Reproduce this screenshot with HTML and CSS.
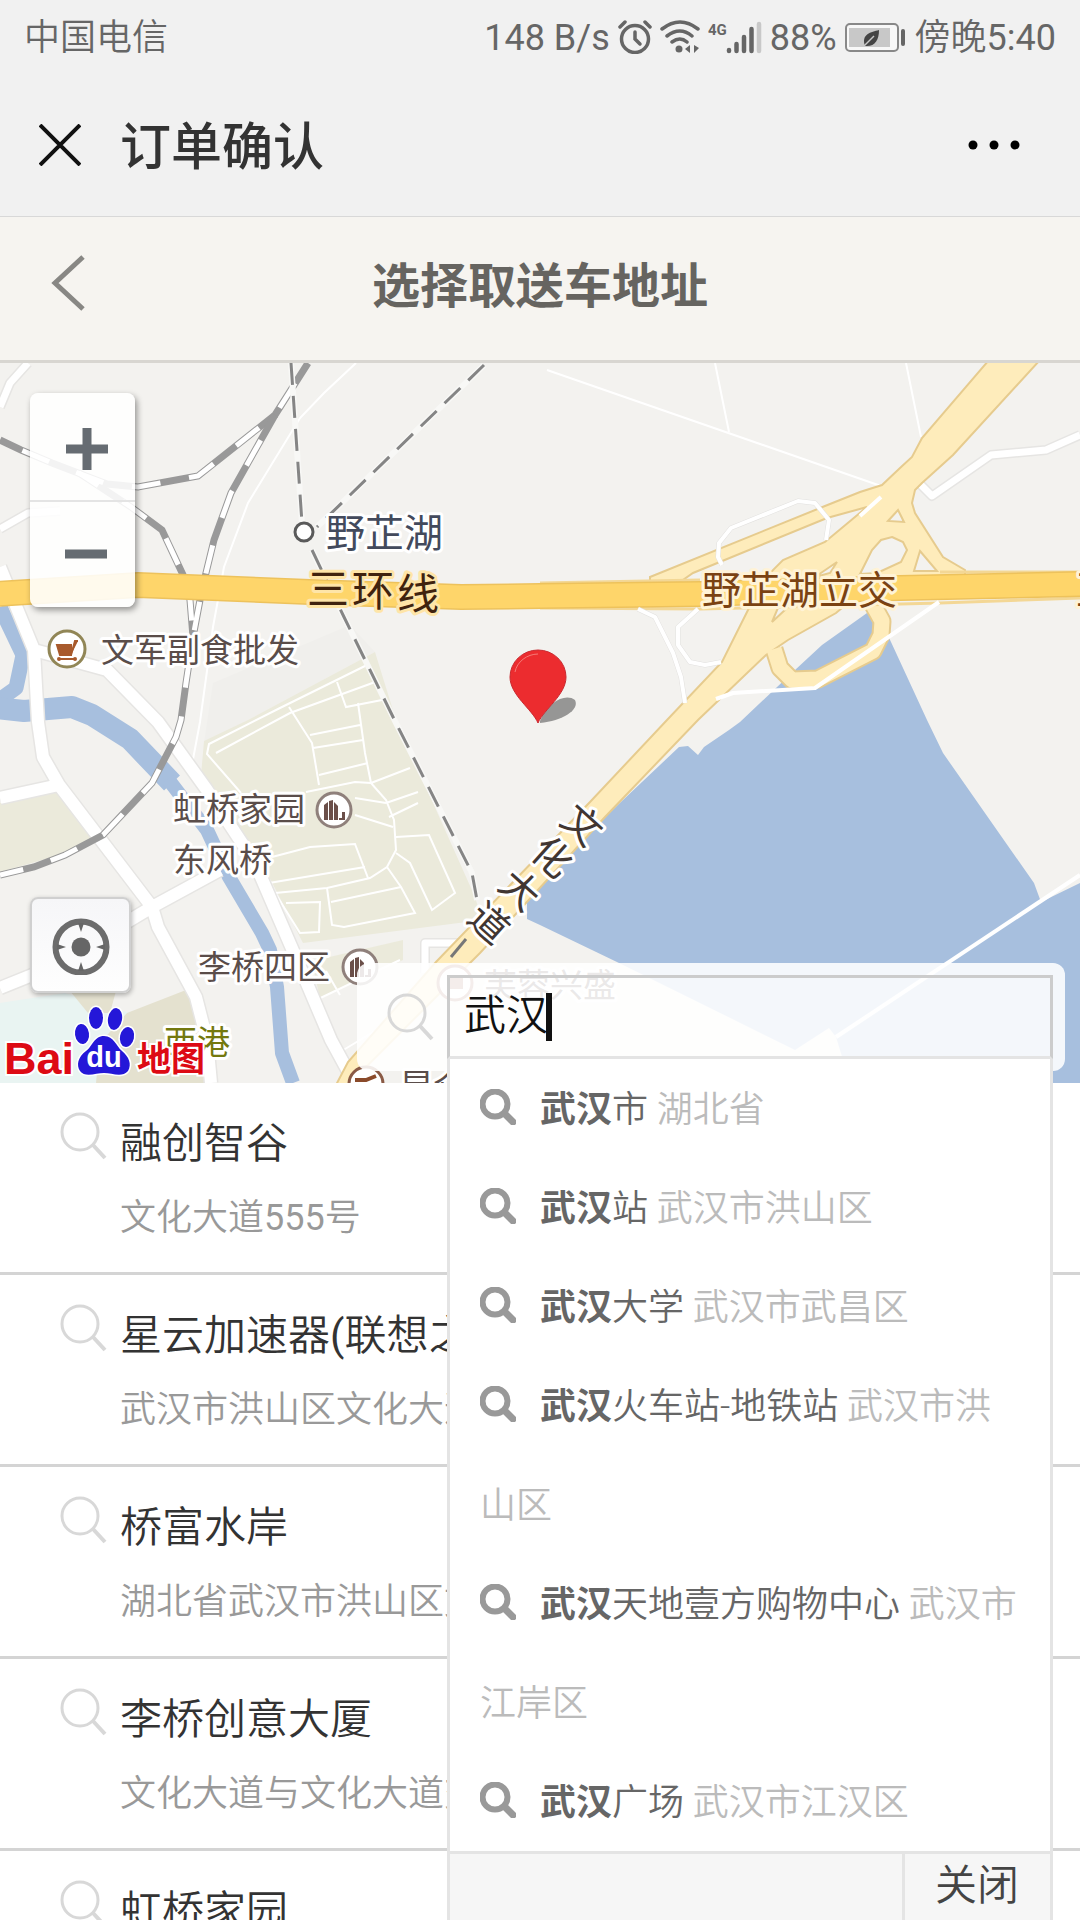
FILE: index.html
```html
<!DOCTYPE html>
<html lang="zh-CN">
<head>
<meta charset="utf-8">
<meta name="viewport" content="width=device-width, initial-scale=1">
<title>订单确认</title>
<link rel="stylesheet" href="styles.css">
</head>
<body>
<svg class="defs" aria-hidden="true">
  <symbol id="search-thin" viewBox="0 0 48 48">
    <circle cx="20" cy="20" r="18" fill="none" stroke="currentColor" stroke-width="3"/>
    <path d="M33 33L45 46" stroke="currentColor" stroke-width="4"/>
  </symbol>
  <symbol id="search-bold" viewBox="0 0 36 36">
    <circle cx="15" cy="15" r="12.500" fill="none" stroke="currentColor" stroke-width="6"/>
    <path d="M25 25L33 33" stroke="currentColor" stroke-width="7" stroke-linecap="round"/>
  </symbol>
  <symbol id="poi-home" viewBox="-20 -20 40 40">
    <circle r="17" fill="#fff" stroke="#8f807b" stroke-width="3"/>
    <path d="M-10 10V-5L-6 -8V10ZM-5 10V-9L-1 -10V10ZM0 10V-8L4 -4V10ZM5 10V8H8V2H11V10Z" fill="#6b4f49"/>
  </symbol>
</svg>
<div class="app">
  <div class="status">
    <span class="carrier">中国电信</span>
    <span class="num">148 B/s</span>
    <svg width="34" height="34" viewBox="0 0 34 34" fill="none" stroke="#666" stroke-linecap="round">
      <circle cx="17" cy="19" r="13.500" stroke-width="3.500"/><path d="M17 12V19L22 24" stroke-width="3.500"/><path d="M2 7L7 2M32 7L27 2" stroke-width="3.500"/>
    </svg>
    <svg width="40" height="34" viewBox="0 0 40 34" fill="none" stroke="#666" stroke-linecap="round" stroke-width="3.500">
      <path d="M2 9Q20 -5 38 9M7 16Q20 6 32 16M12 22Q20 16 27 22"/><circle cx="19" cy="29" r="3.500" fill="#666" stroke="none"/>
      <path d="M30 25V33L25 29ZM34 25V33L39 28Z" fill="#666" stroke="none"/>
    </svg>
    <svg class="signal" width="54" height="34" viewBox="0 0 54 34">
      <text class="net" x="0" y="15">4G</text>
      <g stroke="#666" stroke-width="4.500" stroke-linecap="round"><path d="M21 30V31M28.500 24V31M36 17V31M43.500 9V31"/><path d="M51 4V31" stroke="#c8c8c8"/></g>
    </svg>
    <span class="num">88%</span>
    <svg width="62" height="34" viewBox="0 0 62 34">
      <rect x="1" y="4" width="52" height="27" rx="4" fill="#f8f8f8" stroke="#888" stroke-width="2"/><rect x="4" y="8" width="41" height="19" fill="#c8c8c8"/>
      <path d="M20 26C16 14 26 12 34 10C34 20 30 27 20 26Z" fill="#444"/><path d="M19 26L29 16" stroke="#c8c8c8" stroke-width="1.500"/>
      <rect x="56" y="9" width="4" height="17" rx="2" fill="#666"/>
    </svg>
    <span class="clock">傍晚<b class="num">5:40</b></span>
  </div>
  <header class="topbar">
    <button class="icon-btn" type="button" aria-label="关闭页面"><svg width="42" height="42" viewBox="0 0 42 42"><path d="M1 1L41 41M41 1L1 41" stroke="#111" stroke-width="4"/></svg></button>
    <span class="topbar-title">订单确认</span>
    <button class="icon-btn" type="button" aria-label="更多"><svg width="52" height="12" viewBox="0 0 52 12"><circle cx="5" cy="6" r="4.500"/><circle cx="26" cy="6" r="4.500"/><circle cx="47" cy="6" r="4.500"/></svg></button>
  </header>
  <nav class="nav">
    <button class="icon-btn" type="button" aria-label="返回"><svg width="36" height="56" viewBox="0 0 36 56"><path d="M33 2L5 28L33 54" fill="none" stroke="#888784" stroke-width="5"/></svg></button>
    <h1 class="nav-title">选择取送车地址</h1>
  </nav>

  <section class="map">
    <svg class="map-canvas" viewBox="0 0 1080 720" preserveAspectRatio="xMidYMid slice" role="img" aria-label="地图">
      <rect width="1080" height="720" fill="#f3f2ef"/>
      <!-- built-up and green areas -->
      <path d="M0 440L59 429L100 470L60 492L0 509Z" fill="#ebeadb"/>
      <path d="M0 640L65 630L130 650L96 720H0Z" fill="#e9f4f2"/>
      <path d="M127 650L186 627L200 650L207 720H96L100 680Z" fill="#e4e1cf"/>
      <path d="M70 628H116L110 650H88Z" fill="#e4e1cf"/>
      <path d="M213 320L350 262L375 289L248 357L204 380Z" fill="#f0efec"/>
      <path d="M375 289L248 357L204 378L200 424L262 500L303 580L482 557L475 534L396 357Z" fill="#ebeadb"/>
      <path d="M312 598L403 577V597L320 636Z" fill="#ebeadb"/>
      <!-- water -->
      <path d="M867 250L822 282L795 307L740 359L729 367L704 384L698 392L688 383L679 384L605 454L527 535V556L540 562L619 600L795 687L829 665L836 674L850 720H1080V520L1041 539L1034 520L943 390L927 357L891 279L880 256Z" fill="#a7bfde"/>
      <g fill="none" stroke="#a7bfde" stroke-linejoin="round">
        <path d="M0 244L23 292L16 325L-5 340" stroke-width="15"/>
        <path d="M-5 345L24 348L72 344L92 352L130 376L172 420" stroke-width="22"/>
        <path d="M168 416L207 467L229 514L262 570L270 587L277 624L282 690L293 720" stroke-width="14"/>
      </g>
      <!-- minor streets -->
      <g fill="none" stroke="#fff" stroke-width="2">
        <path d="M356 0L324 30L300 55L248 140L224 204L213 264L200 359L191 407"/>
        <path d="M547 7L881 123M715 0L729 69M906 0L921 74"/>
        <path d="M241 430L207 391L209 381L280 345L367 302M216 390L290 350L378 318M289 344L312 380L319 422M337 319L346 344L382 337M358 340L365 390L371 420M310 372L360 362M313 385L363 377M319 412L368 400"/>
        <path d="M306 429L355 419L371 420L386 437L394 457L396 487L387 504L370 515L327 525L275 530M371 420L410 405M386 440L418 429M389 454L418 440M355 435L386 440M355 452L393 464"/>
        <path d="M272 494L310 484L355 481L368 515M269 520L365 504M396 474L429 472L455 530L432 547L410 500L396 490M387 504L401 524L415 550L344 564L332 562L327 525M331 539L401 524M275 530L300 570L319 569L320 539L286 540"/>
        <path d="M310 640L400 597M326 608L340 632M335 692L380 665"/>
      </g>
      <!-- local roads: casing, then surface -->
      <g fill="none" stroke="#e6e5e3" stroke-width="15" stroke-linejoin="round">
        <path d="M0 204L34 287L38 359L43 394L59 422L152 544L158 564L196 634L207 677L211 720M34 287L107 307L158 359L207 427L255 500L300 604L331 677L350 712M0 435L59 422M0 625L52 604L152 544L220 507"/>
        <path d="M28 0L10 20L0 44M919 120L932 133L991 92L1046 87L1080 72M0 166L28 150L60 148M425 610V580H460" stroke-width="10"/>
      </g>
      <g fill="none" stroke="#fff" stroke-width="12" stroke-linejoin="round">
        <path d="M0 204L34 287L38 359L43 394L59 422L152 544L158 564L196 634L207 677L211 720M34 287L107 307L158 359L207 427L255 500L300 604L331 677L350 712M0 435L59 422M0 625L52 604L152 544L220 507"/>
        <path d="M28 0L10 20L0 44M919 120L932 133L991 92L1046 87L1080 72M0 166L28 150L60 148M425 610V580H460" stroke-width="7"/>
        <path d="M1080 512L836 674" stroke-width="4"/>
      </g>
      <!-- railways -->
      <g fill="none" stroke="#999" stroke-width="7">
        <path d="M308 0L275 52L198 113L138 124L107 121L52 100L21 87L0 77"/>
        <path d="M275 52L231 130L214 177L205 214L200 237L193 274L186 320L181 357L176 374L152 420L103 472L65 492L34 504L0 512"/>
        <path d="M79 110L131 144L162 167L184 214L190 237L193 274"/>
      </g>
      <g fill="none" stroke="#fff" stroke-width="5" stroke-dasharray="29 29">
        <path d="M308 0L275 52L198 113L138 124L107 121L52 100L21 87L0 77" stroke-dashoffset="34"/>
        <path d="M275 52L231 130L214 177L205 214L200 237L193 274L186 320L181 357L176 374L152 420L103 472L65 492L34 504L0 512" stroke-dashoffset="29"/>
        <path d="M79 110L131 144L162 167L184 214L190 237L193 274" stroke-dashoffset="6"/>
      </g>
      <!-- metro under construction -->
      <path d="M291 0L302 160M484 2L317 164M312 187L344 254L396 360L472 510L477 537" fill="none" stroke="#f8f8f6" stroke-width="6"/>
      <path d="M291 0L302 160M484 2L317 164M312 187L344 254L396 360L472 510L477 537" fill="none" stroke="#858585" stroke-width="3" stroke-dasharray="22 11"/>
      <!-- avenue and interchange -->
      <path d="M872 240L882 258L881 272L873 288L818 316L792 317L780 305L774 286" fill="none" stroke="#e6cb8e" stroke-width="19" stroke-linejoin="round"/>
      <path fill="#feecbb" fill-rule="evenodd" stroke="#e6cb8e" stroke-width="2" d="M989 -3L922 75L912 94L900 105L882 122L860 129L820 145L650 214V222L680 219L693 210L827 155L867 144L825 179L783 197L770 210L748 247L722 299L667 357L590 439L436 599L348 699L336 722H348L480 590L605 454L698 357L766 292L788 277L836 250L848 240L965 222V207L943 194L915 150L912 140L915 127L922 120L953 92L1040 -3ZM898 147L904 159L888 158ZM892 174L903 179L907 187L901 199L877 210L860 211L872 187L881 177ZM920 188L937 208L914 208ZM837 199L830 210L815 214ZM786 246L772 259L780 240Z"/>
      <path d="M872 240L882 258L881 272L873 288L818 316L792 317L780 305L774 286" fill="none" stroke="#feecbb" stroke-width="15" stroke-linejoin="round"/>
      <path d="M540 220L700 217M540 245L700 246L940 240L1080 235M940 209L1080 209" fill="none" stroke="#f3d795" stroke-width="3"/>
      <path d="M-5 231L138 222L310 229L461 234L540 233L700 231L900 225L1085 221" fill="none" stroke="#edc25c" stroke-width="26"/>
      <path d="M-5 231L138 222L310 229L461 234L540 233L700 231L900 225L1085 221" fill="none" stroke="#fed56a" stroke-width="23"/>
      <g fill="none" stroke-linejoin="round">
        <path stroke="#e2e1df" stroke-width="5" d="M722 202L718 194L719 180L731 165L798 138L815 140L829 157L826 177M698 246L678 264V282L690 299L705 302L721 299M638 246L655 254L673 290L681 314L685 340"/>
        <path stroke="#fff" stroke-width="4" d="M722 202L718 194L719 180L731 165L798 138L815 140L829 157L826 177M698 246L678 264V282L690 299L705 302L721 299M638 246L655 254L673 290L681 314L685 340M716 336L733 330L815 325L939 239M881 134L860 153"/>
      </g>
      <!-- station and points of interest -->
      <circle cx="304" cy="169" r="9" fill="#fff" stroke="#5a5a5a" stroke-width="3"/>
      <circle cx="67" cy="286" r="18" fill="#fff" stroke="#918656" stroke-width="3"/>
      <path d="M57 282H71V292H60ZM71 292L75 278H78M59 296H76" fill="#a85a2c" stroke="#a85a2c" stroke-width="2"/><circle cx="59" cy="296" r="2" fill="#a85a2c"/><circle cx="75" cy="296" r="2" fill="#a85a2c"/>
      <use href="#poi-home" x="314" y="427" width="40" height="40"/>
      <use href="#poi-home" x="340" y="584" width="40" height="40"/>
      <circle cx="455" cy="620" r="17" fill="#fff" stroke="#a3685c" stroke-width="3"/><path d="M447 614H463V626H447Z" fill="#a3685c"/>
      <circle cx="366" cy="721" r="17" fill="#fff" stroke="#8a5a45" stroke-width="3"/><path d="M355 717H366L376 713" fill="none" stroke="#8a4a2a" stroke-width="4"/>
      <path d="M466 576L451 594" stroke="#777" stroke-width="3"/>
      <!-- place names -->
      <g class="place">
        <text class="lg metro" x="326" y="184">野芷湖</text>
        <text class="xl road" x="307 352 397" y="241 243 246">三环线</text>
        <text class="lg junction" x="702" y="241">野芷湖立交</text>
        <text class="lg junction" x="1076" y="241">互</text>
        <text x="101" y="299">文军副食批发</text>
        <text x="173" y="458">虹桥家园</text>
        <text x="173" y="509">东风桥</text>
        <text x="198" y="616">李桥四区</text>
        <text x="484" y="634">芙蓉兴盛</text>
        <text x="400" y="735">昆仑</text>
        <text class="park" x="164" y="691">西港</text>
        <g class="lg avenue" text-anchor="middle">
          <text transform="translate(582 462) rotate(42)" y="14">文</text>
          <text transform="translate(552 494) rotate(42)" y="14">化</text>
          <text transform="translate(520 527) rotate(42)" y="14">大</text>
          <text transform="translate(489 560) rotate(42)" y="14">道</text>
        </g>
      </g>
      <!-- selected position -->
      <path d="M540 358C548 338 566 330 575 337C580 347 562 358 540 360Z" fill="#777" opacity=".75"/>
      <path d="M538 360C532 346 510 332 510 314A28 27 0 0 1 566 314C566 332 544 346 538 360Z" fill="#ec2c2f" stroke="#c92a30" stroke-width="1"/>
      <path d="M515 309A24 22 0 0 1 538 291" fill="none" stroke="#f57a76" stroke-width="1"/>
      <!-- map provider -->
      <g class="brand">
        <text x="4" y="711">Bai</text>
        <g fill="#2417d8" stroke="#fff" stroke-width="3" paint-order="stroke">
          <ellipse cx="96" cy="655" rx="7" ry="11"/><ellipse cx="115" cy="656" rx="7" ry="11" transform="rotate(10 115 656)"/><ellipse cx="82" cy="671" rx="7" ry="10" transform="rotate(-8 82 671)"/><ellipse cx="127" cy="674" rx="7" ry="10" transform="rotate(12 127 674)"/>
          <path d="M104 673C94 673 92 684 86 688C78 694 76 702 80 708C85 715 96 710 104 710C112 710 122 715 128 708C132 701 129 694 122 688C116 683 114 673 104 673Z"/>
        </g>
        <text class="brand-du" x="104" y="704" text-anchor="middle">du</text>
        <text class="brand-map" x="137" y="708">地图</text>
      </g>
    </svg>

    <div class="zoom">
      <button type="button" aria-label="放大"><svg width="44" height="44" viewBox="0 0 44 44"><path d="M22 1V43M1 22H43" stroke="#666c72" stroke-width="9"/></svg></button>
      <button type="button" aria-label="缩小"><svg width="44" height="44" viewBox="0 0 44 44"><path d="M1 22H43" stroke="#666c72" stroke-width="9"/></svg></button>
    </div>
    <button class="locate" type="button" aria-label="定位"><svg width="60" height="60" viewBox="-30 -32 60 60"><circle r="25.500" fill="none" stroke="#6c6c6c" stroke-width="6"/><circle r="9.500" fill="#666"/><path d="M-3 -24H3L0 -15ZM-3 24H3L0 15ZM-24 -3V3L-15 0ZM24 -3V3L15 0Z" fill="#666"/></svg></button>

    <div class="search">
      <svg class="search-icon" width="48" height="48"><use href="#search-thin"/></svg>
      <div class="search-field">
        <input class="search-input" type="text" value="武汉" aria-label="搜索地址">
        <span class="caret"></span>
        <div class="suggest">
          <ul class="suggest-list">
            <li><svg class="s-icon"><use href="#search-bold"/></svg><b>武汉</b>市 <span class="area">湖北省</span></li>
            <li><svg class="s-icon"><use href="#search-bold"/></svg><b>武汉</b>站 <span class="area">武汉市洪山区</span></li>
            <li><svg class="s-icon"><use href="#search-bold"/></svg><b>武汉</b>大学 <span class="area">武汉市武昌区</span></li>
            <li><svg class="s-icon"><use href="#search-bold"/></svg><b>武汉</b>火车站-地铁站 <span class="area">武汉市洪山区</span></li>
            <li><svg class="s-icon"><use href="#search-bold"/></svg><b>武汉</b>天地壹方购物中心 <span class="area">武汉市江岸区</span></li>
            <li><svg class="s-icon"><use href="#search-bold"/></svg><b>武汉</b>广场 <span class="area">武汉市江汉区</span></li>
          </ul>
          <div class="suggest-foot"><button class="suggest-close" type="button">关闭</button></div>
        </div>
      </div>
    </div>
  </section>

  <ul class="places">
    <li><svg class="p-icon"><use href="#search-thin"/></svg><div><h2>融创智谷</h2><p>文化大道<span class="num">555</span>号</p></div></li>
    <li><svg class="p-icon"><use href="#search-thin"/></svg><div><h2>星云加速器<span class="num">(</span>联想之星<span class="num">)</span></h2><p>武汉市洪山区文化大道</p></div></li>
    <li><svg class="p-icon"><use href="#search-thin"/></svg><div><h2>桥富水岸</h2><p>湖北省武汉市洪山区文</p></div></li>
    <li><svg class="p-icon"><use href="#search-thin"/></svg><div><h2>李桥创意大厦</h2><p>文化大道与文化大道交</p></div></li>
    <li><svg class="p-icon"><use href="#search-thin"/></svg><div><h2>虹桥家园</h2></div></li>
  </ul>
</div>
</body>
</html>
```
FILE: styles.css
```css
* { box-sizing: border-box; }
body, h1, h2, p, ul { margin: 0; padding: 0; }
ul { list-style: none; }
body { font-family: Roboto, "Noto Sans CJK SC", sans-serif; background: #fff; color: #333; }
button, input { font: inherit; color: inherit; margin: 0; padding: 0; border: 0; background: none; }
svg { display: block; flex: none; }
.defs { position: absolute; width: 0; height: 0; }
.app { display: flex; flex-direction: column; height: 100vh; overflow: hidden; }
.app > * { flex: none; }

.status { display: flex; align-items: center; gap: 8px; height: 74px; padding: 0 24px; background: #f1f1f1; color: #666; font-size: 36px; line-height: 48px; }
.status > span { padding-top: 2px; }
.carrier { margin-right: auto; }
.carrier, .clock { font-weight: 350; }
.num { font-weight: 400; }
.net { font: bold 15px Roboto, sans-serif; fill: #666; }

.topbar { display: flex; align-items: center; height: 143px; padding: 0 60px 0 39px; background: #f1f1f1; border-bottom: 1px solid #d8d8d8; }
.icon-btn { display: flex; align-items: center; }
.topbar-title { flex: 1; margin-left: 39px; padding-top: 6px; font-size: 51px; line-height: 72px; font-weight: 500; color: #333; }

.nav { display: grid; grid-template-columns: 90px 1fr 90px; align-items: center; height: 146px; background: #f6f4f0; border-bottom: 3px solid #d8d6d1; }
.nav .icon-btn { height: 100%; padding: 0 0 12px 50px; }
.nav-title { padding-bottom: 4px; font-size: 48px; line-height: 72px; font-weight: 700; color: #666460; text-align: center; }

.map { position: relative; z-index: 1; }
.map-canvas { width: 100%; height: 720px; }
.place text { font: 33px "Noto Sans CJK SC", sans-serif; fill: #5a4d4a; stroke: #fff; stroke-width: 6px; stroke-linejoin: round; paint-order: stroke; }
.place .lg, .place .lg text { font-size: 39px; }
.place .xl { font-size: 42px; }
.place .metro { fill: #434a5c; }
.place .road { fill: #40230f; stroke: #fee5a8; }
.place .junction { fill: #7a4212; stroke: #fff3d6; }
.place .park { fill: #74790f; }
.place .avenue text { fill: #413632; }
.brand text { font: bold 45px "Liberation Sans", sans-serif; fill: #dd0a14; stroke: #fff; stroke-width: 4px; paint-order: stroke; }
.brand .brand-du { font-size: 29px; fill: #fff; stroke: none; }
.brand .brand-map { font: bold 34px "Noto Sans CJK SC", sans-serif; }

.zoom { position: absolute; left: 30px; top: 30px; width: 105px; border-radius: 8px; background: rgba(255, 255, 255, .88); box-shadow: 2px 3px 6px rgba(0, 0, 0, .4); }
.zoom button { display: grid; place-items: center; width: 100%; height: 107px; padding: 4px 0 0 8px; }
.zoom button + button { padding: 0 0 2px 6px; border-top: 2px solid #e4e4e4; }
.locate { position: absolute; left: 30px; bottom: 90px; display: grid; place-items: center; width: 101px; height: 96px; border: 2px solid #d0d0d0; border-radius: 8px; background: linear-gradient(#f6f6f8, #fefefe); box-shadow: 1px 2px 5px rgba(0, 0, 0, .3); }

.search { position: absolute; left: 357px; right: 15px; bottom: 12px; display: flex; align-items: center; gap: 12px; padding: 12px 12px 12px 30px; border-radius: 12px; background: rgba(255, 255, 255, .88); }
.search-icon { color: #d8d8d8; }
.search-field { position: relative; flex: 1; }
.search-input { display: block; width: 100%; height: 84px; padding: 0 14px 12px; border: 3px solid #ccc; border-bottom-color: #e4e4e4; font-size: 42px; font-weight: 350; line-height: 60px; color: #111; outline: 0; }
.caret { position: absolute; left: 99px; top: 18px; width: 6px; height: 48px; background: #111; }

.suggest { position: absolute; left: 0; right: 0; top: 84px; border: 3px solid #e4e4e4; border-top: 0; background: #fff; font-size: 36px; font-weight: 350; line-height: 99px; color: #666; }
.suggest-list { padding: 2px 30px 0; }
.suggest b { font-weight: 700; }
.s-icon { display: inline-block; width: 36px; height: 36px; margin-right: 24px; vertical-align: -3px; color: #999; }
.area { color: #bbb; }
.suggest-foot { display: flex; justify-content: flex-end; height: 99px; margin-top: -2px; border-top: 3px solid #e4e4e4; background: #f6f6f6; }
.suggest-close { display: block; padding: 2px 31px 34px 30px; border-left: 3px solid #e4e4e4; font-size: 42px; font-weight: 350; line-height: 60px; color: #444; }

.places li { display: flex; gap: 12px; height: 192px; padding: 29px 0 0 60px; border-bottom: 3px solid #d4d4d4; }
.p-icon { width: 48px; height: 48px; color: #d8d8d8; }
.places h2 { margin: 2px 0 14px; font-size: 42px; line-height: 60px; font-weight: 350; color: #333; white-space: nowrap; }
.places p { font-size: 36px; line-height: 60px; font-weight: 350; color: #999; white-space: nowrap; }
```
